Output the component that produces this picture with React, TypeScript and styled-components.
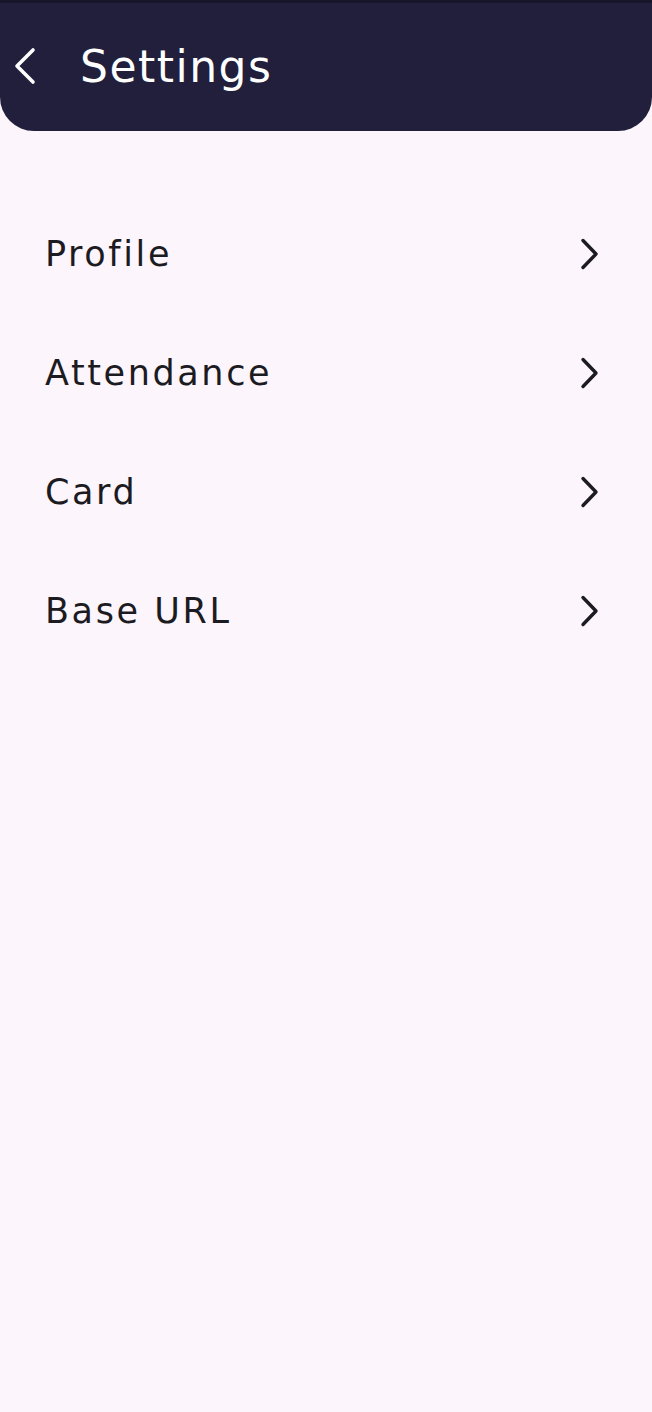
import React from 'react';
import styled, { createGlobalStyle } from 'styled-components';

const GlobalStyle = createGlobalStyle`
  html, body {
    margin: 0;
    padding: 0;
    background: #fcf5fc;
  }
  * {
    box-sizing: border-box;
  }
`;

const Page = styled.div`
  width: 652px;
  min-height: 1412px;
  background: #fcf5fc;
  font-family: 'DejaVu Sans', 'Noto Sans', sans-serif;
`;

const Header = styled.header`
  height: 131px;
  background: #211f3c;
  border-top: 3px solid #16152a;
  border-radius: 0 0 34px 34px;
  display: flex;
  align-items: center;
  padding: 0 0 2px 13px;
  gap: 43px;
`;

const BackButton = styled.button`
  border: 0;
  padding: 0;
  background: transparent;
  display: flex;
  align-items: center;
  cursor: pointer;
`;

const Title = styled.h1`
  margin: 0;
  color: #ffffff;
  font-size: 44px;
  font-weight: 400;
  letter-spacing: 1.5px;
`;

const List = styled.ul`
  list-style: none;
  margin: 0;
  padding: 63px 0 0;
`;

const Row = styled.li`
  height: 119px;
  display: flex;
  align-items: center;
  justify-content: space-between;
  padding: 0 52px 0 45px;
  cursor: pointer;
`;

const Label = styled.span`
  color: #1d1b22;
  font-size: 35px;
  font-weight: 400;
  letter-spacing: 2.6px;
`;

const BackIcon = () => (
  <svg width="24" height="38" viewBox="0 0 24 38" fill="none">
    <path
      d="M20 3 L4 19 L20 35"
      stroke="#ffffff"
      strokeWidth="3.6"
      strokeLinecap="round"
      strokeLinejoin="round"
    />
  </svg>
);

const ChevronRight = () => (
  <svg width="20" height="32" viewBox="0 0 20 32" fill="none">
    <path
      d="M3 2.5 L16 16 L3 29.5"
      stroke="#1d1b22"
      strokeWidth="3.4"
      strokeLinecap="round"
      strokeLinejoin="round"
    />
  </svg>
);

const items = ['Profile', 'Attendance', 'Card', 'Base URL'];

export default function App() {
  return (
    <Page>
      <GlobalStyle />
      <Header>
        <BackButton aria-label="Back">
          <BackIcon />
        </BackButton>
        <Title>Settings</Title>
      </Header>
      <List>
        {items.map((item) => (
          <Row key={item}>
            <Label>{item}</Label>
            <ChevronRight />
          </Row>
        ))}
      </List>
    </Page>
  );
}
